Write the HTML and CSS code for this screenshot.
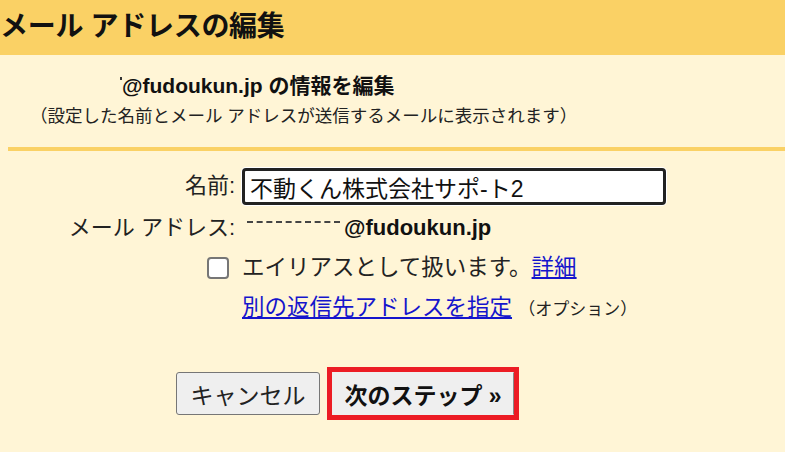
FILE: index.html
```html
<!DOCTYPE html>
<html lang="ja">
<head>
    <meta charset="UTF-8">
    <meta name="viewport" content="width=device-width, initial-scale=1.0">
    <title>メール アドレスの編集</title>
    <link rel="stylesheet" href="styles.css">
</head>
<body>
    <header id="title-bar">
        <h1>メール アドレスの編集</h1>
    </header>

    <section id="intro">
        <h2><span class="redact-dot"></span>@fudoukun.jp の情報を編集</h2>
        <p class="note">（設定した名前とメール アドレスが送信するメールに表示されます）</p>
    </section>

    <div class="divider"></div>

    <form id="edit-form">
        <div class="form-grid">
            <label class="field-label" for="name-input">名前:</label>
            <div class="field name-field">
                <input type="text" id="name-input" value="不動くん株式会社サポ-ト2">
            </div>

            <span class="field-label">メール アドレス:</span>
            <div class="field email">
                <span class="redacted"></span>@fudoukun.jp
            </div>

            <div class="check-cell">
                <span class="checkbox"></span>
            </div>
            <div class="field">エイリアスとして扱います。<a href="#">詳細</a></div>

            <div></div>
            <div class="field"><a href="#">別の返信先アドレスを指定</a> <span class="optional">（オプション）</span></div>
        </div>

        <div class="actions">
            <button type="button" class="btn btn-cancel">キャンセル</button>
            <div class="highlight">
                <button type="button" class="btn btn-next">次のステップ »</button>
            </div>
        </div>
    </form>
</body>
</html>
```

FILE: styles.css
```css
/* General Reset */
* {
    margin: 0;
    padding: 0;
    box-sizing: border-box;
}

body {
    font-family: "Liberation Sans", "Noto Sans CJK JP", sans-serif;
    background-color: #fff5d6;
    color: #222;
    width: 785px;
    height: 452px;
    overflow: hidden;
}

/* Title Bar */
#title-bar {
    background-color: #fad165;
    height: 55px;
}

#title-bar h1 {
    font-size: 28px;
    line-height: 53px;
    font-weight: bold;
    color: #111;
    letter-spacing: -0.3px;
}

/* Intro */
#intro {
    padding-top: 16px;
}

#intro h2 {
    font-size: 21px;
    line-height: 30px;
    font-weight: bold;
    color: #111;
    padding-left: 120px;
}

.redact-dot {
    display: inline-block;
    width: 2px;
    height: 3px;
    background-color: #333;
    vertical-align: 13px;
}

.note {
    font-size: 17.5px;
    line-height: 30px;
    padding-left: 30px;
    color: #222;
}

.divider {
    height: 4px;
    margin: 16px 0 0 8px;
    background-color: #fad165;
}

/* Form */
#edit-form {
    padding-top: 17px;
}

.form-grid {
    display: grid;
    grid-template-columns: 235px 1fr;
    column-gap: 7px;
    row-gap: 10px;
    align-items: center;
    font-size: 22px;
}

.field-label {
    text-align: right;
    line-height: 30px;
    color: #222;
}

.field {
    line-height: 30px;
    font-size: 22.5px;
}

.name-field {
    margin-bottom: -2px;
}

#name-input {
    width: 424px;
    height: 37px;
    border: 3px solid #222;
    border-radius: 4px;
    box-shadow: 0 0 0 1px #fff;
    padding: 0 5px;
    font-family: "Liberation Sans", "Noto Sans CJK JP", sans-serif;
    font-size: 23px;
    color: #111;
    background-color: #fff;
    outline: none;
}

.email {
    font-size: 22px;
    font-weight: bold;
    color: #111;
    padding-left: 5px;
}

.redacted {
    display: inline-block;
    width: 93px;
    height: 2px;
    border-top: 2px dashed #444;
    vertical-align: 12px;
    margin-right: 4px;
}

.check-cell {
    display: flex;
    justify-content: flex-end;
    padding-right: 6px;
}

.checkbox {
    width: 22px;
    height: 22px;
    border: 2px solid #767676;
    border-radius: 4px;
    background-color: #fff;
}

a {
    color: #1515cc;
    text-decoration: underline;
}

.optional {
    font-size: 17px;
    color: #222;
}

/* Actions */
.actions {
    display: flex;
    align-items: center;
    gap: 7px;
    padding: 42px 0 0 176px;
}

.btn {
    height: 43px;
    background-color: #efefef;
    border: 1px solid #767676;
    border-radius: 3px;
    font-family: "Liberation Sans", "Noto Sans CJK JP", sans-serif;
    font-size: 23px;
    color: #222;
    cursor: pointer;
}

.btn-cancel {
    width: 144px;
}

.highlight {
    border: 5px solid #ec1c24;
    display: flex;
}

.btn-next {
    width: 182px;
    font-weight: bold;
    color: #111;
    border-color: #efefef #888 #efefef #efefef;
    border-radius: 0;
}
```
